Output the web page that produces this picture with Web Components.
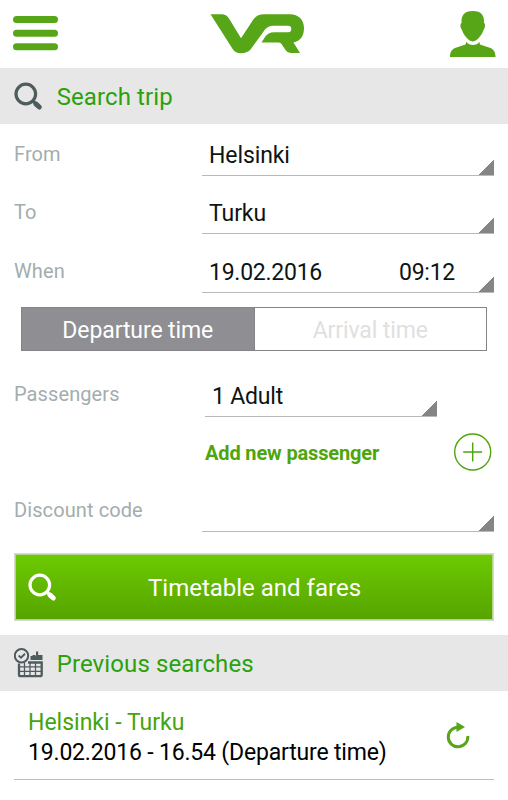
<!DOCTYPE html>
<html lang="en">
  <head>
    <meta charset="utf-8">
    <title>VR</title>
    <style>
      body {
        margin: 0;
        background: #fff;
        color: #0c1414;
        font-family: Roboto, 'Liberation Sans', sans-serif;
        font-size: 23px;
        --green: #57a617;
      }
    </style>
    <script>
      // Small base: every element only differs in its template.
      function define(name, html) {
        customElements.define(
          name,
          class extends HTMLElement {
            constructor() {
              super();
              const template = document.createElement('template');
              template.innerHTML = html;
              const shadow = this.attachShadow({ mode: 'open' });
              shadow.appendChild(template.content.cloneNode(true));
            }
          },
        );
      }

      define('vr-header', `
        <style>
          :host { display: flex; height: 68px; box-sizing: border-box; padding: 0 12px 0 13px; justify-content: space-between; align-items: flex-start; }
          svg { display: block; fill: var(--green); }
          .menu { margin-top: 16px; }
          .logo { margin: 14px 0 0 6px; }
          .user { margin-top: 11px; }
        </style>
        <svg class="menu" width="45" height="35"><rect width="45" height="7" rx="3.5"/><rect y="13.7" width="45" height="7" rx="3.5"/><rect y="27.3" width="45" height="7" rx="3.5"/></svg>
        <svg class="logo" width="94" height="40" viewBox="0 0 94 40"><path d="M.5 .3H12Q16 .3 19 4.500L31 24.300L43 6Q46.500 .3 54 .3H80C88.500 .3 94 6 94 14C94 22 90.500 27 83.500 28.500L90 39H80.500Q77.500 39 75.500 36L71.500 30Q70.500 28.600 68 28.600H51.500L55 23Q58 18.200 64 18.200H78Q81.300 18.200 81.300 15Q81.300 11.700 78 11.700H64Q58 11.500 55 15.500L40.500 35.500Q37 39.300 31 39.300Q25.500 39.300 22.800 35.300Z"/></svg>
        <svg class="user" width="46" height="46" viewBox="0 0 46 46"><path d="M22.800 0C31.500 0 34.500 4.500 34 12C35.500 12.300 35.300 17 33.700 18.600C32.500 23 27.500 30.500 22.800 30.500C18.200 30.500 13 23 11.800 18.600C10.200 17 10 12.300 11.600 12C11 4.500 14.100 0 22.800 0Z"/><path d="M16.500 30.800C19 35.200 27 35.200 29.300 30.800L30 33.400L39 36.500C43.500 38 45.500 40.500 45.500 46H0C0 40.500 2 38 6.500 36.500L15.500 33.400Z"/></svg>
      `);

      define('vr-section', `
        <style>
          :host { display: flex; height: 56px; box-sizing: border-box; padding: 2px 0 0 14px; align-items: center; gap: 13.700px; background: #e7e7e7; color: #2ba10c; font-size: 24px; letter-spacing: 0.100px; }
          ::slotted(svg) { flex: none; margin-top: -2px; }
        </style>
        <slot name="icon"></slot><span><slot></slot></span>
      `);

      define('vr-row', `
        <style>
          :host { display: flex; height: 58px; box-sizing: border-box; padding: 0 14px; align-items: flex-end; }
          label { width: 188px; line-height: 43px; color: #a3adae; font-size: 20px; letter-spacing: 0.100px; }
          slot:not([name]) { display: block; flex: 1; }
        </style>
        <label><slot name="label"></slot></label><slot></slot>
      `);

      define('vr-spinner', `
        <style>
          :host { display: flex; height: 43px; box-sizing: border-box; padding: 0 39px 0 7px; justify-content: space-between; line-height: 45px; letter-spacing: var(--spacing, -0.100px); border-bottom: 1px solid #b9b9b9; background: linear-gradient(135deg, transparent 50%, #858585 50.500%) right bottom / 17px 17px no-repeat border-box; }
        </style>
        <slot></slot>
      `);

      define('vr-toggle', `
        <style>
          :host { display: flex; margin: 14px 21px 0; height: 44px; box-sizing: border-box; border: 1px solid #848388; line-height: 45px; text-align: center; letter-spacing: -0.100px; }
          div { flex: 1; height: 42px; color: #e0e0e0; }
          .on { color: #fff; background: #8f8e93; border-right: 1px solid #848388; }
        </style>
        <div class="on"><slot name="on"></slot></div><div><slot name="off"></slot></div>
      `);

      define('vr-add', `
        <style>
          :host { display: flex; height: 38px; padding: 0 16px 0 205px; justify-content: space-between; align-items: center; color: #4ea50c; font-size: 20px; font-weight: bold; letter-spacing: -0.150px; }
          span { padding-top: 2px; }
          svg { fill: none; stroke: #4ea50c; stroke-width: 1.4; }
        </style>
        <span><slot></slot></span>
        <svg width="38" height="38"><circle cx="18.700" cy="19" r="18"/><path d="M9.200 19h19M18.700 9.500v19"/></svg>
      `);

      define('vr-button', `
        <style>
          :host { display: flex; height: 68px; box-sizing: border-box; margin: 0 14px; padding: 0 13px; align-items: center; border: 1px solid #d5dccf; box-shadow: inset 0 0 0 1px #b5d391; background: linear-gradient(#6dca02, #56a400); color: #fff; font-size: 24px; }
          span { flex: 1; padding: 1px 28px 0 0; text-align: center; }
        </style>
        <slot name="icon"></slot><span><slot></slot></span>
      `);

      define('vr-trip', `
        <style>
          :host { display: flex; height: 89px; box-sizing: border-box; margin: 0 14px; padding: 17px 24px 0 14px; justify-content: space-between; align-items: flex-start; border-bottom: 1px solid #bdbdbd; line-height: 30px; color: #000; }
          .route { color: #45a40b; }
          .date { letter-spacing: -0.180px; }
          svg { margin-top: 14px; }
        </style>
        <div><div class="route"><slot name="route"></slot></div><div class="date"><slot name="date"></slot></div></div>
        <svg width="24" height="27"><path d="M12 5.200A9.800 9.800 0 1 0 21.800 14" fill="none" stroke="#57a617" stroke-width="3"/><path d="M10.500 0L19 5L10.500 10Z" fill="#57a617"/></svg>
      `);
    </script>
  </head>
  <body>
    <vr-header></vr-header>
    <vr-section>
      <svg slot="icon" width="29" height="29" fill="none" stroke="#4d5c5c"><circle cx="11.800" cy="12" r="9.800" stroke-width="3.200"/><path d="M18.500 18.500L21 21" stroke-width="3"/><path d="M21.800 21.800L25.300 25" stroke-width="5" stroke-linecap="round"/></svg>
      Search trip
    </vr-section>
    <vr-row style="height: 52px"><span slot="label">From</span><vr-spinner><span>Helsinki</span></vr-spinner></vr-row>
    <vr-row><span slot="label">To</span><vr-spinner><span>Turku</span></vr-spinner></vr-row>
    <vr-row style="height: 59px"><span slot="label">When</span><vr-spinner style="--spacing: -0.250px"><span>19.02.2016</span><span>09:12</span></vr-spinner></vr-row>
    <vr-toggle><span slot="on">Departure time</span><span slot="off">Arrival time</span></vr-toggle>
    <vr-row style="height: 66px; padding: 0 71px 0 14px"><span slot="label" style="display: block; margin-bottom: 1px">Passengers</span><vr-spinner style="margin-left: 3px; --spacing: -0.200px"><span>1 Adult</span></vr-spinner></vr-row>
    <vr-add style="margin-top: 16px">Add new passenger</vr-add>
    <vr-row style="height: 61px"><span slot="label">Discount code</span><vr-spinner></vr-spinner></vr-row>
    <vr-button style="margin-top: 21px">
      <svg slot="icon" width="29" height="29" fill="none" stroke="#fff"><circle cx="11.800" cy="12" r="9.800" stroke-width="3.200"/><path d="M18.500 18.500L21 21" stroke-width="3"/><path d="M21.800 21.800L25.300 25" stroke-width="5" stroke-linecap="round"/></svg>
      Timetable and fares
    </vr-button>
    <vr-section style="margin-top: 14px">
      <svg slot="icon" width="29" height="30" fill="none" stroke="#4d5c5c">
        <path d="M16.500 12V8h2v-1h3v1h.500V3.500h2.200V7h4.300v5z" fill="#4d5c5c" stroke="none"/>
        <path d="M5 15.500V26.500Q5 28.200 6.500 28.200H26Q27.700 28.200 27.700 26.500V14.500H14" stroke-width="2.300"/>
        <path d="M10.500 15v13M16 15v13M21.500 15v13M5 18.800h22.500M5 23.300h22.500" stroke-width="1.300"/>
        <circle cx="7.500" cy="7.700" r="6.700" stroke-width="2" fill="#e7e7e7"/>
        <path d="M4.700 7.500L7 9.700L11 5.800" stroke-width="1.900"/>
      </svg>
      Previous searches
    </vr-section>
    <vr-trip><span slot="route">Helsinki - Turku</span><span slot="date">19.02.2016 - 16.54 (Departure time)</span></vr-trip>
  </body>
</html>
